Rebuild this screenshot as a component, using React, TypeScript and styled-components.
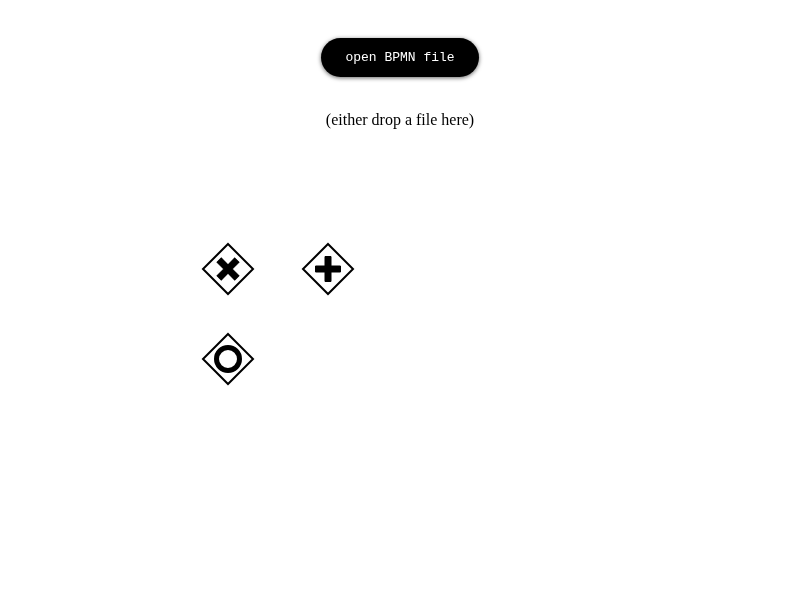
import React from "react";
import styled, { createGlobalStyle } from "styled-components";

const GlobalStyle = createGlobalStyle`
  body {
    margin: 0;
    background: #fff;
    color: #000;
    font: 16px/18px "Liberation Serif", serif;
  }
`;

const Page = styled.main`
  display: flex;
  flex-direction: column;
  align-items: center;
  box-sizing: border-box;
  min-height: 600px;
  padding-top: 38px;
  will-change: transform;
`;

const OpenButton = styled.button`
  width: 158px;
  height: 39px;
  padding: 0;
  border: none;
  border-radius: 20px;
  background: #000;
  color: #fff;
  font: 13px "Liberation Mono", monospace;
  box-shadow: 0 1px 4px rgba(0, 0, 0, 0.6);
  cursor: pointer;
`;

const DropHint = styled.p`
  margin: 34px 0 0;
`;

const GatewayGrid = styled.section`
  display: grid;
  grid-template-columns: repeat(2, 56px);
  gap: 34px 44px;
  align-self: flex-start;
  margin: 112px 0 0 200px;
`;

const GatewayIcon = styled.svg`
  display: block;
  width: 56px;
  height: 56px;
`;

function Gateway({ label, children }: { label: string; children: React.ReactNode }) {
  return (
    <GatewayIcon viewBox="-28 -28 56 56" role="img" aria-label={label}>
      <path d="M0-25 25 0 0 25-25 0Z" fill="#fff" stroke="#000" strokeWidth="2" />
      {children}
    </GatewayIcon>
  );
}

const CROSS = "M-3-12.5H3V-3H12.5V3H3V12.5H-3V3H-12.5V-3H-3Z";

export default function App() {
  return (
    <>
      <GlobalStyle />
      <Page>
        <OpenButton type="button">open BPMN file</OpenButton>
        <DropHint>(either drop a file here)</DropHint>
        <GatewayGrid>
          <Gateway label="Exclusive gateway">
            <path d={CROSS} transform="rotate(45)" stroke="#000" />
          </Gateway>
          <Gateway label="Parallel gateway">
            <path d={CROSS} stroke="#000" strokeLinejoin="round" />
          </Gateway>
          <Gateway label="Inclusive gateway">
            <circle r="11.5" fill="none" stroke="#000" strokeWidth="5" />
          </Gateway>
        </GatewayGrid>
      </Page>
    </>
  );
}
